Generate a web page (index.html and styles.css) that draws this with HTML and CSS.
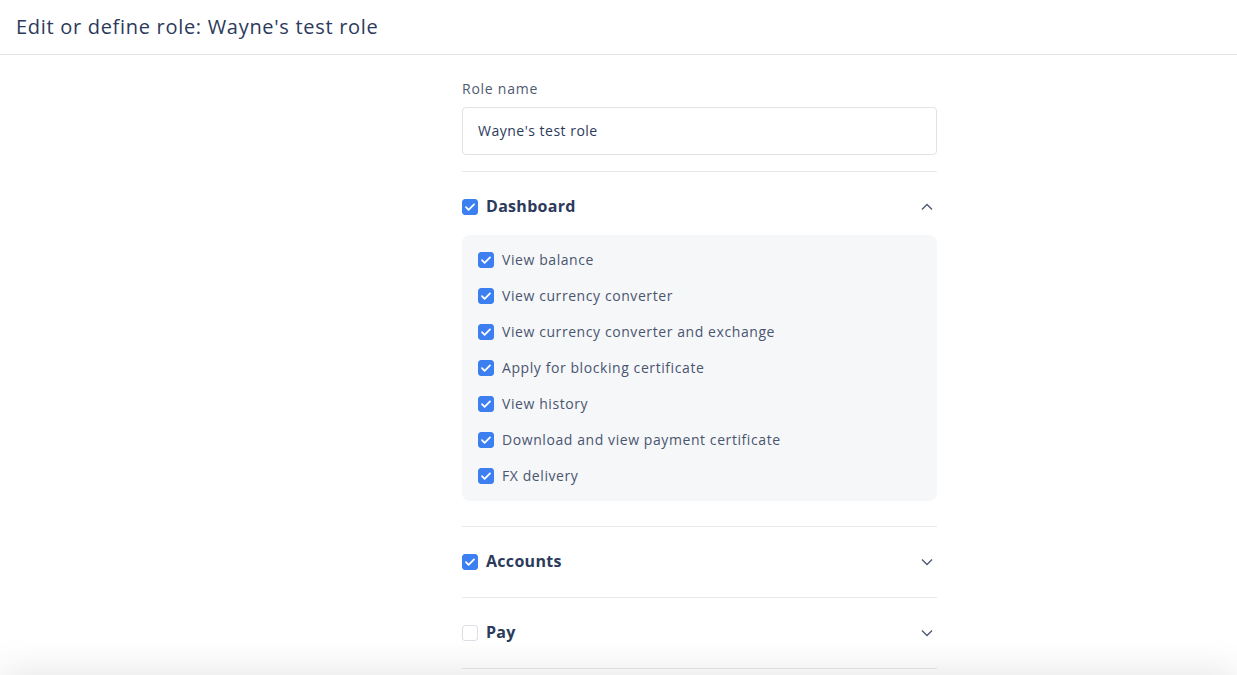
FILE: index.html
```html
<!DOCTYPE html>
<html lang="en">
<head>
<meta charset="utf-8">
<title>Edit role</title>
<link rel="stylesheet" href="styles.css">
</head>
<body>
<header class="topbar">
  <h1 class="title">Edit or define role: Wayne's test role</h1>
</header>
<main class="main">
  <form class="form">
    <label class="field-label" for="rn">Role name</label>
    <input class="text-input" id="rn" type="text" value="Wayne's test role">

    <section class="group">
      <div class="group-head">
        <span class="cb checked"><svg viewBox="0 0 16 16"><path d="M4 8.2l2.6 2.6L12 5.4"/></svg></span>
        <span class="group-title">Dashboard</span>
        <svg class="chev" viewBox="0 0 12 8"><path d="M1 6.5L6 1.5l5 5"/></svg>
      </div>
      <div class="panel">
        <div class="item"><span class="cb checked"><svg viewBox="0 0 16 16"><path d="M4 8.2l2.6 2.6L12 5.4"/></svg></span><span class="item-text">View balance</span></div>
        <div class="item"><span class="cb checked"><svg viewBox="0 0 16 16"><path d="M4 8.2l2.6 2.6L12 5.4"/></svg></span><span class="item-text">View currency converter</span></div>
        <div class="item"><span class="cb checked"><svg viewBox="0 0 16 16"><path d="M4 8.2l2.6 2.6L12 5.4"/></svg></span><span class="item-text">View currency converter and exchange</span></div>
        <div class="item"><span class="cb checked"><svg viewBox="0 0 16 16"><path d="M4 8.2l2.6 2.6L12 5.4"/></svg></span><span class="item-text">Apply for blocking certificate</span></div>
        <div class="item"><span class="cb checked"><svg viewBox="0 0 16 16"><path d="M4 8.2l2.6 2.6L12 5.4"/></svg></span><span class="item-text">View history</span></div>
        <div class="item"><span class="cb checked"><svg viewBox="0 0 16 16"><path d="M4 8.2l2.6 2.6L12 5.4"/></svg></span><span class="item-text">Download and view payment certificate</span></div>
        <div class="item"><span class="cb checked"><svg viewBox="0 0 16 16"><path d="M4 8.2l2.6 2.6L12 5.4"/></svg></span><span class="item-text">FX delivery</span></div>
      </div>
    </section>

    <section class="group">
      <div class="group-head">
        <span class="cb checked"><svg viewBox="0 0 16 16"><path d="M4 8.2l2.6 2.6L12 5.4"/></svg></span>
        <span class="group-title">Accounts</span>
        <svg class="chev" viewBox="0 0 12 8"><path d="M1 1.5L6 6.5l5-5"/></svg>
      </div>
    </section>

    <section class="group">
      <div class="group-head">
        <span class="cb"></span>
        <span class="group-title">Pay</span>
        <svg class="chev" viewBox="0 0 12 8"><path d="M1 1.5L6 6.5l5-5"/></svg>
      </div>
    </section>
    <div class="group-end"></div>
  </form>
</main>
<div class="footer-shadow"></div>
</body>
</html>
```
FILE: styles.css
```css
* { box-sizing: border-box; }
html, body { margin: 0; padding: 0; background: #fff; }
body {
  font-family: "Open Sans", "DejaVu Sans", sans-serif;
  color: #2c3a5b;
  height: 675px;
  overflow: hidden;
}
.topbar {
  height: 55px;
  border-bottom: 1px solid #e2e4e9;
  display: flex;
  align-items: center;
  padding: 0 16px 2px;
}
.title {
  margin: 0;
  font-size: 20px;
  font-weight: 500;
  color: #2c3a5b;
  letter-spacing: 0.7px;
}
.main {
  padding: 24px 0 0 462px;
}
.form {
  width: 475px;
  display: flex;
  flex-direction: column;
}
.field-label {
  font-size: 14px;
  line-height: 20px;
  color: #4f5a72;
  margin-bottom: 8px;
  letter-spacing: 0.75px;
}
.text-input {
  height: 48px;
  border: 1px solid #dfe2e7;
  border-radius: 4px;
  padding: 0 15px 2px;
  font: inherit;
  font-size: 14px;
  font-weight: 500;
  letter-spacing: 0.5px;
  color: #2c3a5b;
  margin-bottom: 16px;
  outline: none;
}
.group {
  border-top: 1px solid #e6e8ec;
}
.group-end { border-top: 1px solid #e6e8ec; }
.group-head {
  display: flex;
  align-items: center;
  height: 70px;
  padding-right: 4px;
}
.group:first-of-type .group-head {
  height: 63px;
  padding-top: 7px;
}
.group-title {
  font-size: 16px;
  font-weight: 700;
  color: #2c3a5b;
  margin-left: 8px;
  flex: 1;
  letter-spacing: 0.3px;
  margin-top: -2px;
}
.chev {
  width: 12px;
  height: 8px;
  fill: none;
  stroke: #4c5872;
  stroke-width: 1.3;
}
.cb {
  width: 16px;
  height: 16px;
  border-radius: 3px;
  border: 1.5px solid #dcdfe5;
  background: #fff;
  display: inline-flex;
  flex: none;
}
.cb.checked {
  background: #3c7ff0;
  border-color: #3c7ff0;
}
.cb svg {
  fill: none;
  stroke: #fff;
  stroke-width: 1.8;
  stroke-linecap: round;
  stroke-linejoin: round;
  margin: -1.5px;
  width: 16px;
  height: 16px;
}
.panel {
  background: #f6f7f9;
  border-radius: 8px;
  padding: 16px;
  display: flex;
  flex-direction: column;
  gap: 18px;
  margin-bottom: 25px;
}
.item {
  display: flex;
  align-items: center;
  height: 18px;
  font-size: 14px;
  color: #4a5570;
}
.item-text {
  letter-spacing: 0.58px;
  margin-top: -2px;
}
.item .cb { margin-right: 8px; }
.footer-shadow {
  position: fixed;
  left: 0;
  right: 0;
  bottom: -40px;
  height: 40px;
  background: #fff;
  box-shadow: 0 0 40px rgba(0, 0, 0, 0.12);
}
```
